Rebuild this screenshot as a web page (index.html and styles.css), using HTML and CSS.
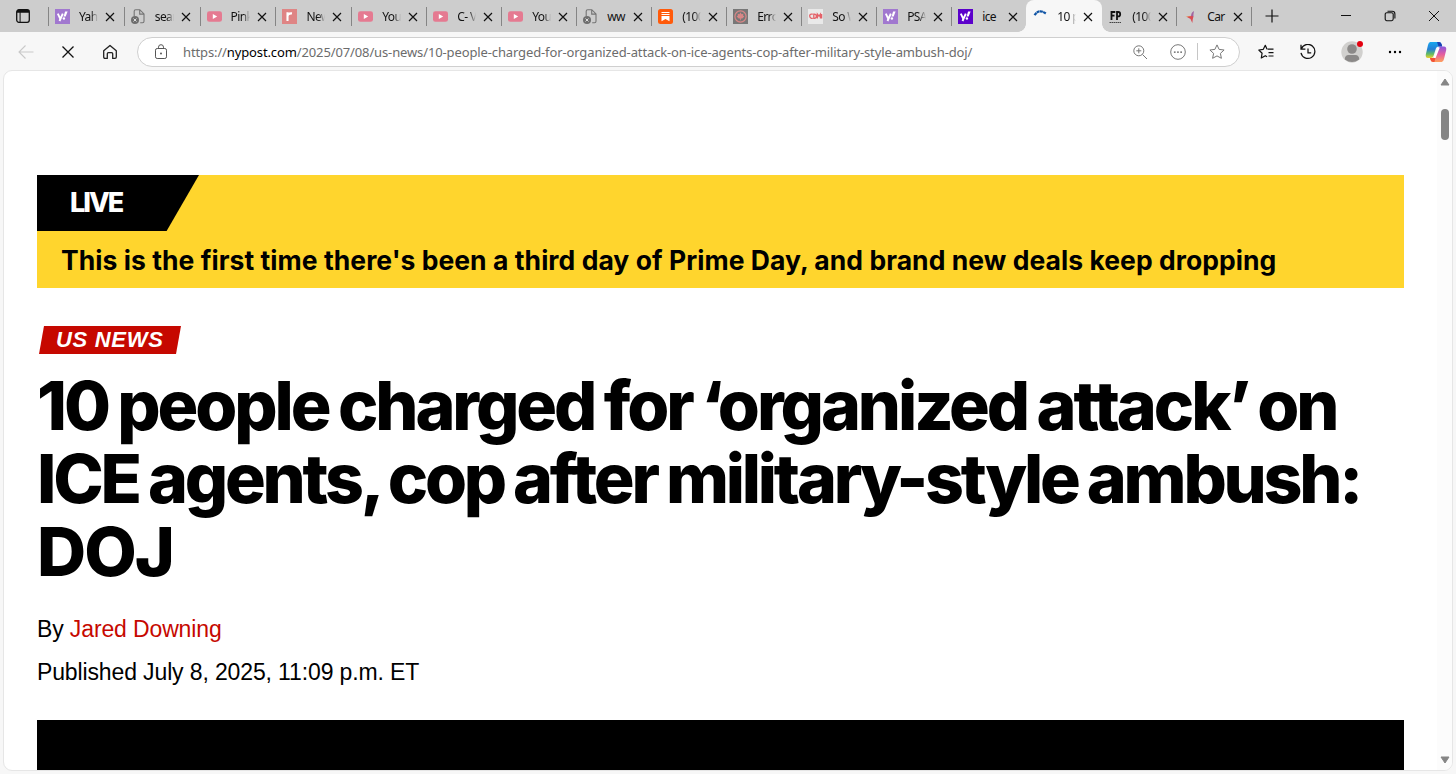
FILE: index.html
```html
<!DOCTYPE html>
<html lang="en">
<head>
    <meta charset="UTF-8">
    <meta name="viewport" content="width=device-width, initial-scale=1.0">
    <title>10 people charged for organized attack</title>
    <link rel="stylesheet" href="styles.css">
</head>
<body>

<svg class="sprite">
    <symbol id="close" viewBox="0 0 10 10"><path d="M1 1l8 8M9 1l-8 8" fill="none" stroke="currentColor" stroke-width="1.2"/></symbol>
    <symbol id="yahoo" viewBox="0 0 15 15">
        <rect width="15" height="15"/>
        <path d="M2.8 4.6l2.5 5.2M7.8 4.6L4.5 12" stroke="#fff" stroke-width="1.9" fill="none"/>
        <path d="M10.1 2.6h2.5L10.7 7.6H8.5z" fill="#fff"/><circle cx="8.9" cy="9.5" r="1.2" fill="#fff"/>
    </symbol>
    <symbol id="youtube" viewBox="0 0 15 15"><rect y="2.2" width="15" height="10.6" rx="2.4" fill="#e57a91"/><path d="M5.8 5l4.4 2.5L5.8 10z" fill="#fff"/></symbol>
    <symbol id="missing" viewBox="0 0 15 15">
        <path d="M3.2 7V2.2q0-1.5 1.5-1.5h4.1l4.2 4.2v7.4q0 1.5-1.5 1.5H9.2M8.7.9v4.2h4.2" fill="none" stroke="#747474" stroke-width="1.1"/>
        <circle cx="4" cy="11" r="4" fill="#6e6e6e"/><path d="M2.5 9.5l3 3M5.5 9.5l-3 3" stroke="#ddd"/>
    </symbol>
</svg>

<div class="tab-bar">
    <svg class="tab-menu" viewBox="0 0 14 14"><rect x=".7" y=".7" width="12.6" height="12.6" rx="2.2" fill="none" stroke="#111" stroke-width="1.3"/><path d="M1 1h12v2.700H1zM3.600 3.500h1v9.500h-1z" fill="#111"/></svg>
    <div class="tabs">
        <div class="tab wide"><svg class="favicon yahoo-faded"><use href="#yahoo"/></svg><span>Yah</span><svg class="close"><use href="#close"/></svg></div>
        <div class="tab wide"><svg class="favicon"><use href="#missing"/></svg><span>sear</span><svg class="close"><use href="#close"/></svg></div>
        <div class="tab wide"><svg class="favicon"><use href="#youtube"/></svg><span>Pink</span><svg class="close"><use href="#close"/></svg></div>
        <div class="tab wide"><svg class="favicon" viewBox="0 0 15 15"><rect width="15" height="15" fill="#df8585"/><path d="M5.500 12V3.200M5.500 7q.3-3 4.500-2.600" fill="none" stroke="#fff" stroke-width="2.100"/></svg><span>New</span><svg class="close"><use href="#close"/></svg></div>
        <div class="tab"><svg class="favicon"><use href="#youtube"/></svg><span>You</span><svg class="close"><use href="#close"/></svg></div>
        <div class="tab"><svg class="favicon"><use href="#youtube"/></svg><span>C- V</span><svg class="close"><use href="#close"/></svg></div>
        <div class="tab"><svg class="favicon"><use href="#youtube"/></svg><span>You</span><svg class="close"><use href="#close"/></svg></div>
        <div class="tab"><svg class="favicon"><use href="#missing"/></svg><span class="solid">ww</span><svg class="close"><use href="#close"/></svg></div>
        <div class="tab"><svg class="favicon" viewBox="0 0 15 15"><rect width="15" height="15" rx="2.500" fill="#ff5a0a"/><path d="M3.500 3h8v1h-8zM3.500 5h8v1h-8zM3.500 7h8v5.300l-4-2.300-4 2.300z" fill="#fff"/></svg><span>(100</span><svg class="close"><use href="#close"/></svg></div>
        <div class="tab"><svg class="favicon" viewBox="0 0 15 15"><rect width="15" height="15" fill="#777"/><circle cx="7.500" cy="7.500" r="5.600" fill="none" stroke="#d98686" stroke-width="1.200"/><path d="M7.500 3.200l1 2 1.800-.4-.2 1.800 1.200.8-2 2-1.400.2v1.600h-.8V9.600l-1.400-.2-2-2 1.200-.8-.2-1.800 1.800.4z" fill="#d98686"/></svg><span>Erro</span><svg class="close"><use href="#close"/></svg></div>
        <div class="tab"><svg class="favicon" viewBox="0 0 15 15"><rect width="15" height="15" fill="#e9e9e9"/><path d="M4.800 5.200H3.300Q1.700 5.200 1.700 7t1.600 2.300h1.500M5.800 5.200v4.100h.6q2 0 2-2.050T6.400 5.200zM9.400 9.600V5.200l1.600 2 1.400-2v4.400M13.600 5v4.600" fill="none" stroke="#e46168" stroke-width="1.300"/></svg><span>So W</span><svg class="close"><use href="#close"/></svg></div>
        <div class="tab"><svg class="favicon yahoo-faded"><use href="#yahoo"/></svg><span>PSA</span><svg class="close"><use href="#close"/></svg></div>
        <div class="tab"><svg class="favicon yahoo"><use href="#yahoo"/></svg><span class="solid">ice</span><svg class="close"><use href="#close"/></svg></div>
        <div class="tab active"><svg class="favicon" viewBox="0 0 15 15"><path d="M1.500 6.200Q6-.5 12.800 4.500" fill="none" stroke="#0f54a5" stroke-width="2.200" stroke-dasharray="3 .4"/></svg><span>10 p</span><svg class="close"><use href="#close"/></svg></div>
        <div class="tab"><svg class="favicon" viewBox="0 0 15 15"><path d="M3.500 11V3h3.800M3.500 6.600h3M9 11V3h1.200q2 0 2 2.200t-2 2.200H9" fill="none" stroke="#111" stroke-width="1.800"/><path d="M1.500 13.500h12" stroke="#444" stroke-dasharray="1.500 .5"/></svg><span>(100</span><svg class="close"><use href="#close"/></svg></div>
        <div class="tab"><svg class="favicon" viewBox="0 0 15 15"><path d="M2.500 7.500l6-.7 1 2.500z" fill="#e8905a"/><path d="M8 8q-.2-4.500 3-6-.6 2.500-.6 5.500L9 9z" fill="#a164a0"/><path d="M4 8l5-1 1.500.5L9.800 10l-.5 4L7.500 10z" fill="#d94b54"/></svg><span class="solid">Car</span><svg class="close"><use href="#close"/></svg></div>
    </div>
    <svg class="new-tab" viewBox="0 0 14 14"><path d="M7 .5v13M.5 7h13" stroke="#111" stroke-width="1.200"/></svg>
    <div class="window-buttons">
        <svg viewBox="0 0 12 12"><path d="M1 5.500h10" stroke="#111" stroke-width="1"/></svg>
        <svg viewBox="0 0 12 12"><rect x="1.200" y="2.700" width="8" height="8" rx="1.600" fill="none" stroke="#111" stroke-width="1.100"/><path d="M3.500 1.200h4.700q2.700 0 2.700 2.700v4.600" fill="none" stroke="#111" stroke-width="1.100"/></svg>
        <svg viewBox="0 0 12 12"><path d="M1 1l10 10M11 1L1 11" stroke="#111" stroke-width="1"/></svg>
    </div>
</div>

<div class="toolbar">
    <div class="nav-buttons">
        <svg viewBox="0 0 16 16"><path d="M15.500 8H1M7.500 1.500L1 8l6.500 6.500" fill="none" stroke="#c9c9c9" stroke-width="1.100"/></svg>
        <svg viewBox="0 0 16 16"><path d="M2.500 2.500l11 11M13.500 2.500l-11 11" stroke="#111" stroke-width="1.300"/></svg>
        <svg viewBox="0 0 16 16"><path d="M1.700 6.700L8 1.400l6.300 5.300v6.400q0 1.300-1.300 1.300h-2.300V9.800q0-1.100-1.100-1.100H6.400q-1.100 0-1.100 1.100v4.600H3q-1.300 0-1.300-1.300z" fill="none" stroke="#222" stroke-width="1.300" stroke-linejoin="round"/></svg>
    </div>
    <div class="address-bar">
        <svg class="lock" viewBox="0 0 14 16"><rect x="1.500" y="4.500" width="11" height="10" rx="1.700" fill="none" stroke="#555"/><path d="M4.500 4.500V3.200q0-2.500 2.500-2.500t2.500 2.500v1.300" fill="none" stroke="#555"/><circle cx="7" cy="9.500" r=".9" fill="#444"/></svg>
        <div class="url">https://<b>nypost.com</b>/2025/07/08/us-news/10-people-charged-for-organized-attack-on-ice-agents-cop-after-military-style-ambush-doj/</div>
        <div class="address-actions">
            <svg viewBox="0 0 16 16"><circle cx="6.800" cy="6.800" r="5" fill="none" stroke="#777"/><path d="M10.500 10.500l4.500 4.500M6.800 4.300v5M4.300 6.800h5" stroke="#777"/></svg>
            <svg viewBox="0 0 16 16"><circle cx="8" cy="8" r="7.300" fill="none" stroke="#777"/><path d="M3.900 7.400h1.700v1.300H3.900zM7.100 7.400h1.700v1.300H7.100zM10.300 7.400H12v1.300h-1.700z" fill="#555"/></svg>
            <i class="divider"></i>
            <svg viewBox="0 0 16 16"><path d="M8 .9l2.100 4.500 5 .6-3.700 3.400 1 4.900L8 11.900l-4.400 2.400 1-4.900L.9 6l5-.6z" fill="none" stroke="#777" stroke-linejoin="round"/></svg>
        </div>
    </div>
    <svg class="tool" viewBox="0 0 16 16"><path d="M9.500 5.200H15.500M10.500 8.700h5M10.500 12h5" stroke="#111" stroke-width="1.200"/><path d="M9 5.200L7.300 1.300 5.300 5.300.8 6l3.300 3.200-.8 4.800L7.300 11.700l1.800 1" fill="none" stroke="#111" stroke-width="1.200" stroke-linejoin="round"/></svg>
    <svg class="tool history" viewBox="0 0 16 16"><path d="M1 .8v4.400h4.400M1.300 5A7 7 0 1 1 1 8.800M8 4.500v4.300h3.200" fill="none" stroke="#111" stroke-width="1.250"/></svg>
    <div class="profile">
        <svg viewBox="0 0 22 22"><circle cx="11" cy="11" r="10.700" fill="#d1d0ce"/><circle cx="11" cy="8" r="4.800" fill="#8b8988"/><path d="M3.800 18.500q0-4.500 3.800-4.500h6.800q3.800 0 3.800 4.500-7.200 5-14.400 0z" fill="#8b8988"/></svg>
        <i class="dot"></i>
    </div>
    <svg class="tool more" viewBox="0 0 16 16"><circle cx="3" cy="8" r="1.200"/><circle cx="8" cy="8" r="1.200"/><circle cx="13" cy="8" r="1.200"/></svg>
    <svg class="copilot" viewBox="0 0 22 20">
        <defs>
            <linearGradient id="cool" x2="0" y2="1"><stop stop-color="#18a7ee"/><stop offset=".45" stop-color="#267fd5"/><stop offset=".75" stop-color="#62bb65"/><stop offset="1" stop-color="#efd02c"/></linearGradient>
            <linearGradient id="warm" x2="0" y2="1"><stop stop-color="#8a56dc"/><stop offset=".5" stop-color="#e45ca1"/><stop offset="1" stop-color="#ffa15c"/></linearGradient>
        </defs>
        <path d="M5.300 0h8.500q2 0 2.600 2l.7 2.500h-3.500q-2 0-2.700 2L8.500 14q-.6 2-2.500 2H3Q.3 16 .8 12.500L3 3Q3.700 0 5.300 0z" fill="url(#cool)"/>
        <path d="M12 0h2q2 0 2.600 2l.7 2.500h-3.800z" fill="#1c41b5"/>
        <path d="M16.700 20H8.200q-2 0-2.600-2L5 16h3q2 0 2.700-2l2.400-7.500q.6-2 2.500-2H19q2.700 0 2.200 3.500L19 17q-.7 3-2.300 3z" fill="url(#warm)"/>
        <path d="M5 16h3q2 0 2.700-2L9.500 20H8.200q-2 0-2.600-2z" fill="#f25135"/>
        <path d="M12.800 5.500h2L10.600 16H8.500z" fill="#fff"/>
    </svg>
</div>

<div class="page">
    <main class="article">
        <div class="live-banner">
            <div class="live-label"><span>LIVE</span></div>
            <a class="live-text">This is the first time there's been a third day of Prime Day, and brand new deals keep dropping</a>
        </div>
        <div class="section-tag"><span>US NEWS</span></div>
        <h1>
            <span class="line-one">10 people charged for ‘organized attack’ on</span>
            <span class="line-two">ICE agents, cop after military-style ambush:</span>
            <span class="line-three">DOJ</span>
        </h1>
        <div class="byline">By <a>Jared Downing</a></div>
        <div class="published">Published July 8, 2025, 11:09 p.m. ET</div>
        <div class="video"></div>
    </main>
    <div class="scrollbar">
        <svg viewBox="0 0 10 8"><path d="M5 1l4 6H1z" fill="#858585" stroke="#858585" stroke-linejoin="round"/></svg>
        <div class="thumb"></div>
        <svg class="down" viewBox="0 0 10 8"><path d="M5 7l4-6H1z" fill="#858585" stroke="#858585" stroke-linejoin="round"/></svg>
    </div>
</div>

</body>
</html>
```
FILE: styles.css
```css
* {
    box-sizing: border-box;
}
body {
    margin: 0;
    height: 774px;
    overflow: hidden;
    display: flex;
    flex-direction: column;
    background-color: #f7f7f7;
    font-family: "Liberation Sans", Arial, sans-serif;
}
svg {
    display: block;
    flex: none;
}
.sprite {
    position: absolute;
    width: 0;
    height: 0;
}

/* tabs */
.tab-bar {
    display: flex;
    align-items: center;
    height: 32px;
    flex: none;
    background-color: #cdcdcd;
    padding-left: 16px;
}
.tab-menu {
    width: 14px;
    height: 14px;
    margin-right: 18px;
}
.tabs {
    display: flex;
    height: 32px;
}
.tab {
    position: relative;
    display: flex;
    align-items: center;
    width: 75px;
    padding-left: 7px;
    font: 12px "Noto Sans", sans-serif;
    color: #111;
}
.tab.wide {
    width: 75.8px;
}
.tab::before,
.tab:last-child::after {
    content: "";
    position: absolute;
    left: 0;
    top: 7px;
    width: 1px;
    height: 19px;
    background-color: #858585;
}
.tab:last-child::after {
    left: auto;
    right: -1px;
}
.tab.active {
    width: 76px;
    margin-right: -1px;
    background-color: #f7f7f7;
    border-radius: 8px 8px 0 0;
}
.tab.active::before,
.tab.active::after {
    content: "";
    position: absolute;
    top: 24px;
    left: -8px;
    width: 8px;
    height: 8px;
    background: radial-gradient(circle at 0 0, transparent 7.5px, #f7f7f7 8px);
}
.tab.active::after {
    left: 100%;
    background: radial-gradient(circle at 8px 0, transparent 7.5px, #f7f7f7 8px);
}
.tab.active + .tab::before {
    display: none;
}
.favicon {
    width: 15px;
    height: 15px;
}
.yahoo {
    fill: #5b00cb;
}
.yahoo-faded {
    fill: #a178cf;
}
.tab span {
    width: 20px;
    margin: 0 6px 0 9px;
    overflow: hidden;
    white-space: nowrap;
    letter-spacing: -0.6px;
    -webkit-mask-image: linear-gradient(to right, #000 60%, transparent 95%);
    mask-image: linear-gradient(to right, #000 60%, transparent 95%);
}
.tab span.solid {
    -webkit-mask-image: none;
    mask-image: none;
}
.close {
    width: 10px;
    height: 10px;
    margin-top: 1px;
}
.new-tab {
    width: 14px;
    height: 14px;
    margin-left: 14px;
}
.window-buttons {
    display: flex;
    gap: 32px;
    margin: 0 16px 0 auto;
}
.window-buttons svg {
    width: 12px;
    height: 12px;
}

/* toolbar */
.toolbar {
    display: flex;
    align-items: center;
    height: 38px;
    flex: none;
    padding: 1px 0 0 18px;
}
.nav-buttons {
    display: flex;
    gap: 26px;
    margin-right: 19px;
}
.nav-buttons svg,
.address-actions svg,
.tool {
    width: 16px;
    height: 16px;
}
.address-bar {
    display: flex;
    align-items: center;
    width: 1103px;
    height: 30px;
    padding: 0 14px 0 16px;
    background-color: #fff;
    border: 1px solid #cfcfcf;
    border-radius: 15px;
}
.lock {
    width: 14px;
    height: 16px;
    margin-right: 15px;
}
.url {
    font: 13px "Noto Sans", sans-serif;
    letter-spacing: -0.125px;
    color: #6c6c6c;
    white-space: nowrap;
}
.url b {
    font-weight: normal;
    color: #000;
}
.address-actions {
    display: flex;
    align-items: center;
    gap: 22px;
    margin-left: auto;
}
.divider {
    width: 1px;
    height: 17px;
    margin: 0 -11px;
    background-color: #c6c6c6;
}
.tool {
    margin-left: 18px;
}
.history {
    margin-left: 26px;
}
.profile {
    position: relative;
    margin-left: 25px;
}
.profile svg {
    width: 22px;
    height: 22px;
}
.dot {
    position: absolute;
    top: 0;
    right: 0;
    width: 6px;
    height: 6px;
    border-radius: 50%;
    background-color: #e3000f;
}
.more {
    margin-left: 24px;
}
.copilot {
    width: 22px;
    height: 20px;
    margin-left: 22px;
}

/* page */
.page {
    display: flex;
    height: 701px;
    margin: 0 3px;
    background-color: #fff;
    border: 1px solid #e6e6e6;
    border-radius: 9px;
    overflow: hidden;
    flex: none;
}
.article {
    flex: 1;
    padding: 104px 33px 0;
}
.live-banner {
    height: 113px;
    background-color: #ffd52d;
}
.live-label {
    width: 162px;
    height: 56px;
    padding-left: 33px;
    background-color: #000;
    clip-path: polygon(0 0, 100% 0, 80% 100%, 0 100%);
    color: #fff;
    font: 800 27px/55px Inter, sans-serif;
    letter-spacing: -2px;
}
.live-text {
    display: block;
    padding-left: 24px;
    font: 700 26.5px/59px Inter, sans-serif;
    letter-spacing: 0.05px;
    white-space: nowrap;
}
.section-tag {
    width: 142px;
    height: 28px;
    margin: 38px 0 0 2px;
    padding-left: 17px;
    background-color: #c60800;
    clip-path: polygon(5px 0, 100% 0, 137px 100%, 0 100%);
    color: #fff;
    font: italic bold 22px/27px "Liberation Sans", Arial, sans-serif;
    letter-spacing: 0.7px;
    white-space: nowrap;
}
h1 {
    margin: 15px 0 0;
    font: 800 68px/73px Inter, sans-serif;
    color: #000;
}
h1 span {
    display: block;
    width: max-content;
    white-space: nowrap;
    letter-spacing: -3.07px;
    word-spacing: -2.5px;
}
h1 .line-two {
    letter-spacing: -3.22px;
}
h1 .line-three {
    letter-spacing: -2px;
}
.byline,
.published {
    font-size: 23px;
    line-height: 43px;
    letter-spacing: -0.13px;
}
.byline {
    margin-top: 20px;
}
.byline a {
    color: #c60800;
}
.video {
    height: 60px;
    margin-top: 26px;
    background-color: #000;
}
.scrollbar {
    display: flex;
    flex-direction: column;
    align-items: center;
    width: 15px;
    padding: 7px 0 6px;
    background-color: #fcfcfc;
}
.scrollbar svg {
    width: 10px;
    height: 8px;
}
.thumb {
    width: 8px;
    height: 31px;
    margin-top: 23px;
    border-radius: 4px;
    background-color: #858585;
}
.scrollbar .down {
    margin-top: auto;
}
```
